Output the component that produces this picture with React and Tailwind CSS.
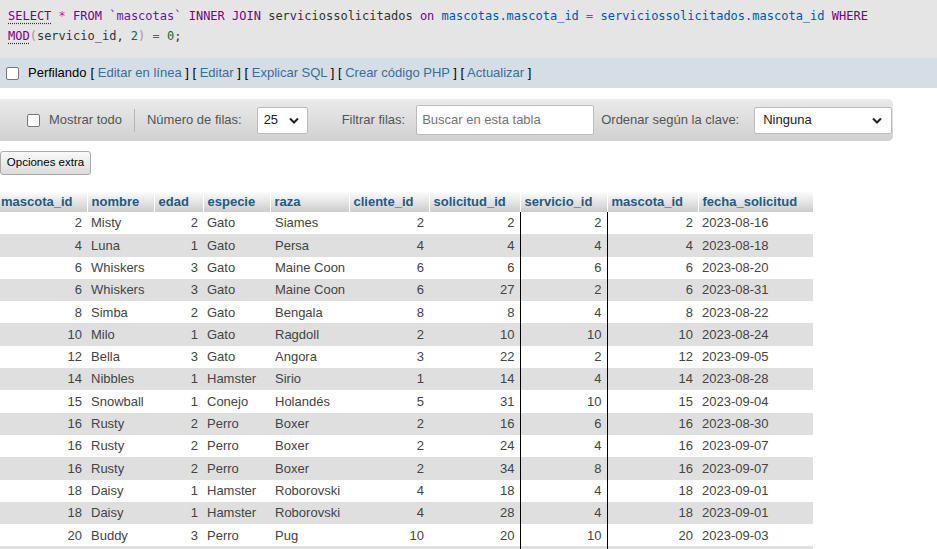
import React from 'react';

const filas = [
  [2, 'Misty', 2, 'Gato', 'Siames', 2, 2, 2, 2, '2023-08-16'],
  [4, 'Luna', 1, 'Gato', 'Persa', 4, 4, 4, 4, '2023-08-18'],
  [6, 'Whiskers', 3, 'Gato', 'Maine Coon', 6, 6, 6, 6, '2023-08-20'],
  [6, 'Whiskers', 3, 'Gato', 'Maine Coon', 6, 27, 2, 6, '2023-08-31'],
  [8, 'Simba', 2, 'Gato', 'Bengala', 8, 8, 4, 8, '2023-08-22'],
  [10, 'Milo', 1, 'Gato', 'Ragdoll', 2, 10, 10, 10, '2023-08-24'],
  [12, 'Bella', 3, 'Gato', 'Angora', 3, 22, 2, 12, '2023-09-05'],
  [14, 'Nibbles', 1, 'Hamster', 'Sirio', 1, 14, 4, 14, '2023-08-28'],
  [15, 'Snowball', 1, 'Conejo', 'Holandés', 5, 31, 10, 15, '2023-09-04'],
  [16, 'Rusty', 2, 'Perro', 'Boxer', 2, 16, 6, 16, '2023-08-30'],
  [16, 'Rusty', 2, 'Perro', 'Boxer', 2, 24, 4, 16, '2023-09-07'],
  [16, 'Rusty', 2, 'Perro', 'Boxer', 2, 34, 8, 16, '2023-09-07'],
  [18, 'Daisy', 1, 'Hamster', 'Roborovski', 4, 18, 4, 18, '2023-09-01'],
  [18, 'Daisy', 1, 'Hamster', 'Roborovski', 4, 28, 4, 18, '2023-09-01'],
  [20, 'Buddy', 3, 'Perro', 'Pug', 10, 20, 10, 20, '2023-09-03'],
  ['', '', '', '', '', '', '', '', '', ''],
];

const columnas = [
  { nombre: 'mascota_id', ancho: 'w-[87px]' },
  { nombre: 'nombre', ancho: 'w-[67px]' },
  { nombre: 'edad', ancho: 'w-[49px]' },
  { nombre: 'especie', ancho: 'w-[67px]' },
  { nombre: 'raza', ancho: 'w-[79px]' },
  { nombre: 'cliente_id', ancho: 'w-[80px]' },
  { nombre: 'solicitud_id', ancho: 'w-[91px]' },
  { nombre: 'servicio_id', ancho: 'w-[87px]' },
  { nombre: 'mascota_id', ancho: 'w-[91px]' },
  { nombre: 'fecha_solicitud', ancho: 'w-[115px]' },
];

const numerica = [true, false, true, false, false, true, true, true, true, false];

function Chevron() {
  return (
    <svg width="10" height="7" viewBox="0 0 10 7" className="shrink-0">
      <path d="M1 1.5 L5 5.5 L9 1.5" fill="none" stroke="#222" strokeWidth="2" />
    </svg>
  );
}

function Kw({ children, punteado }) {
  return (
    <span
      className={`text-[#770088] ${punteado ? 'underline decoration-dotted decoration-[#333] underline-offset-[3px]' : ''}`}
    >
      {children}
    </span>
  );
}

function Caja() {
  return <span className="block w-[13px] h-[13px] rounded-[2px] border border-[#767676] bg-white shrink-0" />;
}

export default function App() {
  return (
    <div className="w-[937px] bg-white font-['Liberation_Sans',Arial,sans-serif] text-[13px] text-[#444]">
      {/* consulta SQL */}
      <div className="bg-[#e5e5e5] pt-[6px] pb-[12px] px-[8px] font-['DejaVu_Sans_Mono',monospace] text-[12px] leading-[20px] text-[#333] whitespace-pre">
        <div>
          <Kw punteado>SELECT</Kw> <span className="text-[#f000d8]">*</span> <Kw>FROM</Kw>{' '}
          <span className="text-[#5a1f94]">`mascotas`</span> <Kw>INNER JOIN</Kw> serviciossolicitados <Kw>on</Kw>{' '}
          <span className="text-[#0055aa]">mascotas.mascota_id</span> <span className="text-[#f000d8]">=</span>{' '}
          <span className="text-[#0055aa]">serviciossolicitados.mascota_id</span> <Kw>WHERE</Kw>
        </div>
        <div>
          <Kw punteado>MOD</Kw>
          <span className="text-[#999]">(</span>servicio_id, <span className="text-[#116644]">2</span>
          <span className="text-[#999]">)</span> <span className="text-[#f000d8]">=</span>{' '}
          <span className="text-[#116644]">0</span>;
        </div>
      </div>

      {/* barra perfilando */}
      <div className="h-[30px] bg-[#d5dde5] flex items-center pl-[6px] text-[13px] text-black">
        <Caja />
        <span className="ml-[9px]">Perfilando</span>
        <span className="ml-[4px] whitespace-pre">
          [ <span className="text-[#3a6d99]">Editar en línea</span> ] [ <span className="text-[#3a6d99]">Editar</span> ] [{' '}
          <span className="text-[#3a6d99]">Explicar SQL</span> ] [ <span className="text-[#3a6d99]">Crear código PHP</span> ] [{' '}
          <span className="text-[#3a6d99]">Actualizar</span> ]
        </span>
      </div>

      {/* barra de navegación */}
      <div className="mt-[11px] w-[893px] h-[42px] rounded-r-[5px] bg-gradient-to-b from-[#ebebeb] to-[#d0d0d0] flex items-center text-[#555]">
        <div className="ml-[27px] mt-[1px]">
          <Caja />
        </div>
        <span className="ml-[9px]">Mostrar todo</span>
        <span className="ml-[12px] w-px h-[23px] bg-[#b5b5b5]" />
        <span className="ml-[12px]">Número de filas:</span>
        <div className="ml-[15px] w-[51px] h-[27px] bg-white border border-[#bbb] rounded-[2px] flex items-center justify-between pl-[6px] pr-[8px] text-[#222]">
          <span>25</span>
          <Chevron />
        </div>
        <span className="ml-[34px]">Filtrar filas:</span>
        <div className="ml-[11px] w-[178px] h-[30px] bg-white border border-[#bbb] rounded-[2px] flex items-center pl-[5px] text-[#757575]">
          Buscar en esta tabla
        </div>
        <span className="ml-[7px]">Ordenar según la clave:</span>
        <div className="ml-[15px] w-[138px] h-[27px] bg-white border border-[#bbb] rounded-[2px] flex items-center justify-between pl-[8px] pr-[9px] text-[#222]">
          <span>Ninguna</span>
          <Chevron />
        </div>
      </div>

      {/* opciones extra */}
      <div className="mt-[10px]">
        <button className="h-[24px] w-[91px] rounded-[3px] border border-[#aaa] bg-gradient-to-b from-[#fafafa] to-[#dcdcdc] text-[11.5px] text-black">
          Opciones extra
        </button>
      </div>

      {/* resultados */}
      <table className="mt-[16px] table-fixed border-collapse w-[813px]">
        <colgroup>
          {columnas.map((c, i) => (
            <col key={i} className={c.ancho} />
          ))}
        </colgroup>
        <thead>
          <tr className="h-[21px]">
            {columnas.map((c, i) => (
              <th
                key={i}
                className={`text-left font-bold text-[#235a81] bg-gradient-to-b from-white to-[#cccccc] border-l border-white first:border-l-0 px-[4px] py-0 whitespace-nowrap ${i === 0 ? 'pl-[1px]' : ''}`}
              >
                {c.nombre}
              </th>
            ))}
          </tr>
        </thead>
        <tbody>
          {filas.map((f, r) => (
            <tr key={r} className={`h-[22.3px] ${r % 2 === 1 ? 'bg-[#dfdfdf]' : 'bg-white'}`}>
              {f.map((v, i) => (
                <td
                  key={i}
                  className={`py-0 px-[5px] whitespace-nowrap ${numerica[i] ? 'text-right' : 'text-left'} ${
                    i === 7 || i === 8 ? 'border-l border-black' : ''
                  } ${i === 1 || i === 3 || i === 9 ? 'pl-[4px]' : ''}`}
                >
                  {v}
                </td>
              ))}
            </tr>
          ))}
        </tbody>
      </table>
    </div>
  );
}
